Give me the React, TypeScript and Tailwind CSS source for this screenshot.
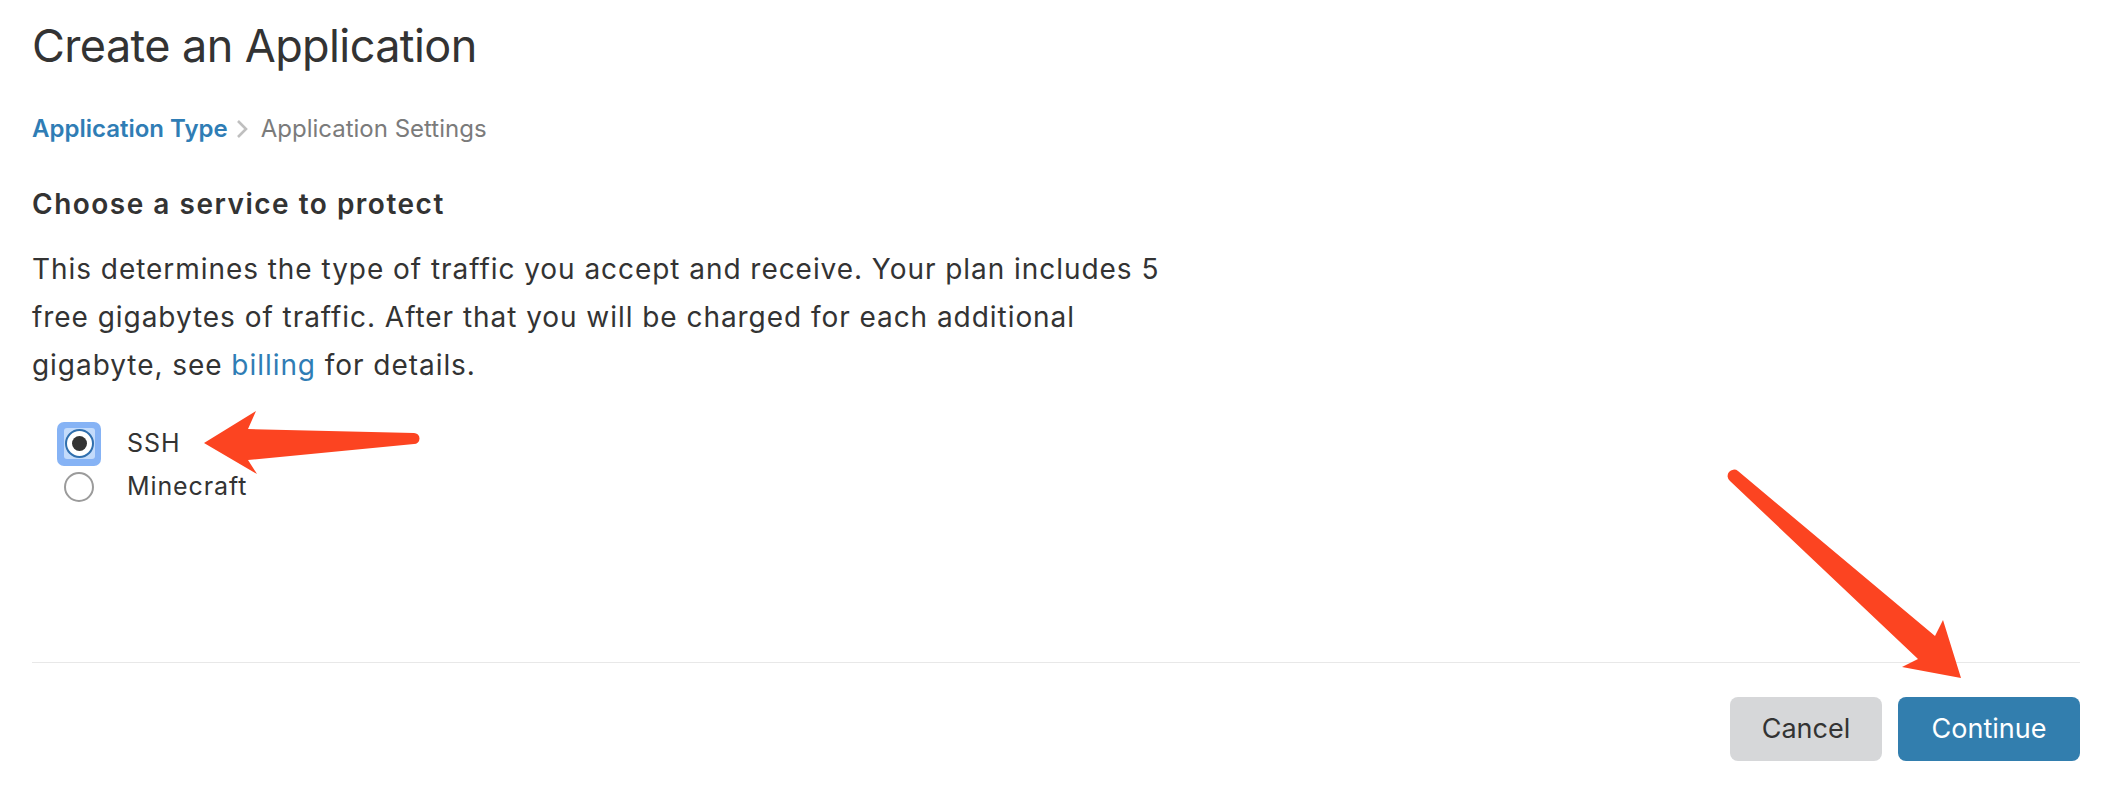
import React from "react";

type Option = { id: string; label: string };

const OPTIONS: Option[] = [
  { id: "ssh", label: "SSH" },
  { id: "minecraft", label: "Minecraft" },
];

function Radio({ checked }: { checked: boolean }) {
  if (checked) {
    return (
      <div className="w-[44px] h-[44px] rounded-[7px] bg-[#86b3f5] flex items-center justify-center">
        <div className="w-[31px] h-[31px] rounded-[3px] bg-[#c3dbfb] flex items-center justify-center">
          <div className="w-[29px] h-[29px] rounded-full border-[2px] border-[#2f6fae] bg-white flex items-center justify-center">
            <div className="w-[15px] h-[15px] rounded-full bg-[#333]" />
          </div>
        </div>
      </div>
    );
  }
  return (
    <div className="w-[44px] h-[44px] flex items-center justify-center">
      <div className="w-[30px] h-[30px] rounded-full border-[2px] border-[#9b9b9b] bg-white" />
    </div>
  );
}

function Arrows() {
  // annotation arrows drawn over the page
  return (
    <svg
      className="absolute inset-0 pointer-events-none"
      width={2106}
      height={802}
      viewBox="0 0 2106 802"
    >
      <path
        d="M204 443 L256 411 L248 429 L414 433 A5.5 5.5 0 0 1 414 444 L248 460 L257 474 Z"
        fill="#fc4421"
      />
      <path
        d="M1961 678 L1943 620 L1935 636 L1738 471 A6 6 0 0 0 1730 481 L1918 659 L1902 667 Z"
        fill="#fc4421"
      />
    </svg>
  );
}

export default function App() {
  const selected = "ssh";

  return (
    <div className="relative w-[2106px] h-[802px] bg-white text-[#333] font-['Inter',sans-serif] overflow-hidden">
      <div className="pl-8 pr-[26px] pt-[19px]">
        <h1 className="text-[45px] leading-[54px] font-normal tracking-[-0.6px]">Create an Application</h1>

        <div className="mt-[40px] flex items-center h-[32px] text-[24px] leading-[32px]">
          <span className="font-semibold text-[#2f7db5]">Application Type</span>
          <svg width="14" height="20" viewBox="0 0 14 20" className="ml-[7px] mr-[12px]">
            <polyline points="3,2 11,10 3,18" fill="none" stroke="#bfbfbf" strokeWidth="2.6" />
          </svg>
          <span className="text-[#7b7b7b]">Application Settings</span>
        </div>

        <h2 className="mt-[41px] text-[28px] leading-[36px] font-semibold tracking-[1.5px]">
          Choose a service to protect
        </h2>

        <p className="mt-[23px] w-[1170px] text-[28px] leading-[48px] tracking-[0.95px]">
          This determines the type of traffic you accept and receive. Your plan includes 5 free gigabytes of
          traffic. After that you will be charged for each additional gigabyte, see{" "}
          <a className="text-[#2f7db5]">billing</a> for details.
        </p>

        <div className="mt-[33px] flex flex-col">
          {OPTIONS.map((o) => (
            <label key={o.id} className="flex items-center h-[43px]">
              <div className="ml-[25px]">
                <Radio checked={o.id === selected} />
              </div>
              <span className="ml-[26px] text-[25px] tracking-[0.9px]">{o.label}</span>
            </label>
          ))}
        </div>

        <div className="mt-[154px] border-t border-[#e8e8e8]" />

        <div className="mt-[34px] flex justify-end gap-4">
          <button className="w-[152px] h-[64px] rounded-lg bg-[#d6d7d9] text-[27px] text-[#333]">Cancel</button>
          <button className="w-[182px] h-[64px] rounded-lg bg-[#327eae] text-[27px] text-white">Continue</button>
        </div>
      </div>
      <Arrows />
    </div>
  );
}
